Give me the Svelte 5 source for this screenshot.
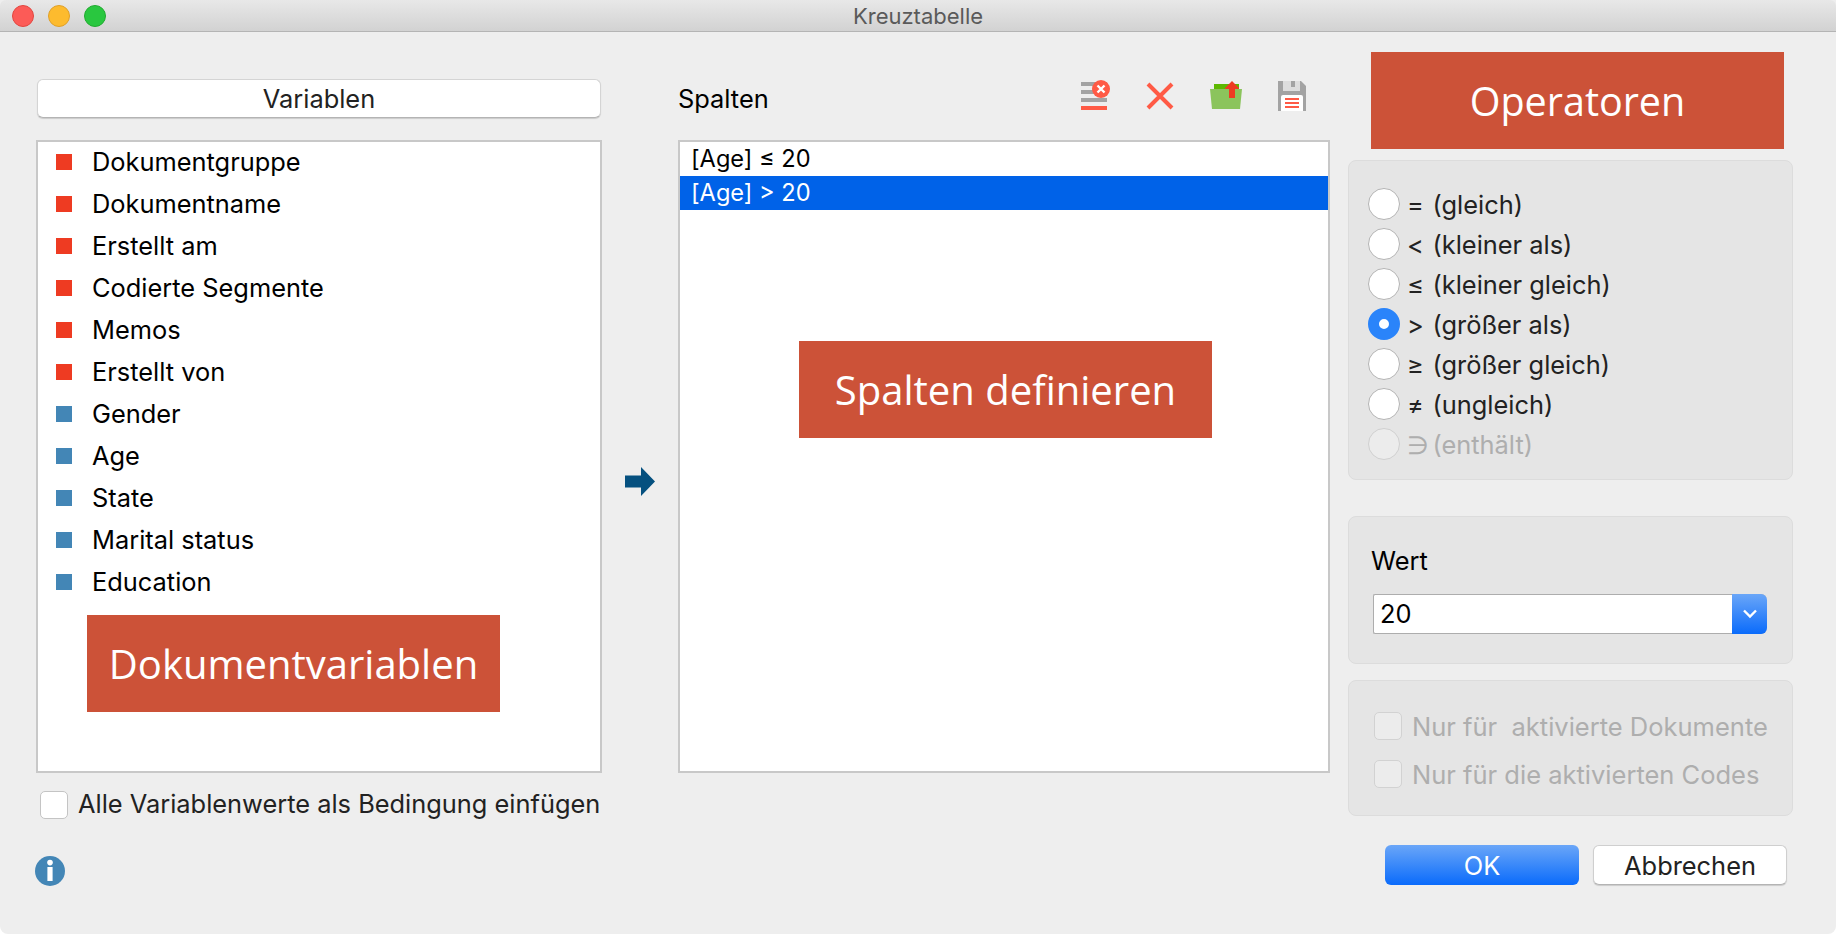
<script>
  const variables = [
    { name: 'Dokumentgruppe', kind: 'sys' },
    { name: 'Dokumentname', kind: 'sys' },
    { name: 'Erstellt am', kind: 'sys' },
    { name: 'Codierte Segmente', kind: 'sys' },
    { name: 'Memos', kind: 'sys' },
    { name: 'Erstellt von', kind: 'sys' },
    { name: 'Gender', kind: 'user' },
    { name: 'Age', kind: 'user' },
    { name: 'State', kind: 'user' },
    { name: 'Marital status', kind: 'user' },
    { name: 'Education', kind: 'user' }
  ];

  const columns = ['[Age] ≤ 20', '[Age] > 20'];
  let selectedColumn = $state(1);

  const operators = [
    { sign: '=', label: '(gleich)' },
    { sign: '<', label: '(kleiner als)' },
    { sign: '≤', label: '(kleiner gleich)' },
    { sign: '>', label: '(größer als)' },
    { sign: '≥', label: '(größer gleich)' },
    { sign: '≠', label: '(ungleich)' },
    { sign: '∋', label: '(enthält)', disabled: true }
  ];
  let selectedOp = $state(3);
</script>

<div class="window">
  <header class="titlebar">
    <span class="light red"></span>
    <span class="light yellow"></span>
    <span class="light green"></span>
    <span class="title">Kreuztabelle</span>
  </header>

  <div class="content">
    <section class="left">
      <button class="head-btn">Variablen</button>
      <ul class="list var-list">
        {#each variables as v}
          <li class="var-row">
            <span class="marker {v.kind}"></span>
            <span class="var-name">{v.name}</span>
          </li>
        {/each}
        <div class="callout callout-doc">Dokumentvariablen</div>
      </ul>
      <div class="all-values">
        <span class="check"></span>
        <span class="all-text">Alle Variablenwerte als Bedingung einfügen</span>
      </div>
      <svg class="info" width="30" height="30" viewBox="0 0 30 30">
        <circle cx="15" cy="15" r="15" fill="#4386b6" />
        <circle cx="15" cy="6.6" r="2.8" fill="#fff" />
        <rect x="12.4" y="11" width="5.2" height="14" fill="#fff" />
      </svg>
    </section>

    <div class="arrow-col">
      <svg width="30" height="30" viewBox="0 0 30 30">
        <path d="M0 8.5 H16 V0 L30 14.5 L16 29 V20.5 H0 Z" fill="#05507f" />
      </svg>
    </div>

    <section class="middle">
      <div class="mid-head">
        <span class="mid-label">Spalten</span>
        <div class="tools">
          <svg width="32" height="32" viewBox="0 0 32 32">
            <rect x="3" y="2" width="26" height="4" fill="#a3a3a3" />
            <rect x="3" y="10" width="26" height="4" fill="#a3a3a3" />
            <rect x="3" y="18" width="26" height="4" fill="#a3a3a3" />
            <rect x="3" y="26" width="26" height="4" fill="#ff5a45" />
            <circle cx="23" cy="9" r="9" fill="#ff5a45" />
            <path d="M19.5 5.5 L26.5 12.5 M26.5 5.5 L19.5 12.5" stroke="#fff" stroke-width="2.4" />
          </svg>
          <svg width="32" height="32" viewBox="0 0 32 32">
            <path d="M4 4 L28 28 M28 4 L4 28" stroke="#ff5a45" stroke-width="4" />
          </svg>
          <svg width="32" height="32" viewBox="0 0 32 32">
            <rect x="4" y="4" width="25" height="6" fill="#5db800" />
            <path d="M0 9 H32 L30 29 H2 Z" fill="#8bc45c" />
            <path d="M22 1 L29 8 V9 H25 V18 H19 V9 H15 V8 Z" fill="#ee3b22" />
          </svg>
          <svg width="32" height="32" viewBox="0 0 32 32">
            <path d="M2 1 H25 L30 6 V31 H2 Z" fill="#a3a3a3" />
            <rect x="7" y="1" width="17" height="10" fill="#dddddd" />
            <rect x="15" y="1" width="4" height="6" fill="#a3a3a3" />
            <path d="M5 31 V17 Q5 15 7 15 H25 Q27 15 27 17 V31 Z" fill="#fff" />
            <path d="M9 18 H23 V20 H9 Z M9 22 H23 V24 H9 Z M9 26 H23 V28 H9 Z" fill="#ff5a45" />
          </svg>
        </div>
      </div>
      <ul class="list col-list">
        {#each columns as col, i}
          <li class="col-row" class:selected={i === selectedColumn}>{col}</li>
        {/each}
        <div class="callout callout-col">Spalten definieren</div>
      </ul>
    </section>

    <aside class="right">
      <div class="callout callout-op">Operatoren</div>
      <div class="panel ops">
        {#each operators as op, i}
          <div class="op-row" class:disabled={op.disabled}>
            <span class="radio" class:on={i === selectedOp}></span>
            <span class="sign">{op.sign}</span>
            <span>{op.label}</span>
          </div>
        {/each}
      </div>
      <div class="panel value">
        <div class="value-label">Wert</div>
        <div class="combo">
          <span class="combo-text">20</span>
          <span class="combo-btn">
            <svg width="16" height="10" viewBox="0 0 16 10">
              <path d="M2 1.5 L8 7.5 L14 1.5" fill="none" stroke="#fff" stroke-width="2.4" />
            </svg>
          </span>
        </div>
      </div>
      <div class="panel limits">
        <div class="limit-row"><span class="check dim"></span><span>Nur für&nbsp; aktivierte Dokumente</span></div>
        <div class="limit-row"><span class="check dim"></span><span>Nur für die aktivierten Codes</span></div>
      </div>
      <div class="actions">
        <button class="btn primary">OK</button>
        <button class="btn">Abbrechen</button>
      </div>
    </aside>
  </div>
</div>

<style>
  :global(body) {
    margin: 0;
    background: #fff;
  }

  .window {
    width: 1836px;
    height: 934px;
    background: #eeeeee;
    border-radius: 0 0 8px 8px;
    overflow: hidden;
    font-family: Inter, "Noto Sans", sans-serif;
    color: #222;
  }

  .titlebar {
    height: 32px;
    box-sizing: border-box;
    display: flex;
    align-items: center;
    padding-left: 12px;
    gap: 14px;
    position: relative;
    background: linear-gradient(#e8e8e8, #d2d2d2);
    border-bottom: 1px solid #b4b4b4;
    border-radius: 6px 6px 0 0;
  }

  .light {
    width: 22px;
    height: 22px;
    border-radius: 50%;
    box-sizing: border-box;
  }
  .light.red { background: #fc5b57; border: 1px solid #e2463f; }
  .light.yellow { background: #fdbb2e; border: 1px solid #e0a028; }
  .light.green { background: #29c73f; border: 1px solid #20ab2f; }

  .title {
    position: absolute;
    left: 0;
    right: 0;
    text-align: center;
    font-size: 22px;
    color: #5a5a5a;
  }

  .content {
    display: flex;
    padding: 47px 0 0 36px;
  }

  .left {
    width: 566px;
    display: flex;
    flex-direction: column;
  }

  .head-btn {
    height: 39px;
    margin: 0 1px 22px 1px;
    padding: 0;
    border: 1px solid #d4d4d4;
    border-bottom-color: #b4b4b4;
    border-radius: 6px;
    background: #fff;
    box-shadow: 0 1px 1px rgba(0, 0, 0, 0.15);
    font: inherit;
    font-size: 25.4px;
    color: #222;
  }

  .list {
    position: relative;
    height: 633px;
    box-sizing: border-box;
    margin: 0;
    padding: 0;
    list-style: none;
    background: #fff;
    border: 2px solid #c8c8c8;
  }

  .var-row {
    height: 42px;
    display: flex;
    align-items: center;
    font-size: 25.4px;
    color: #000;
  }
  .var-row:first-child {
    margin-top: -1px;
  }

  .var-name {
    margin-bottom: 2px;
  }

  .marker {
    width: 16px;
    height: 16px;
    margin: 0 20px 0 18px;
  }
  .marker.sys { background: #ee3b22; }
  .marker.user { background: #4386b6; }

  .all-values {
    display: flex;
    align-items: center;
    gap: 10px;
    margin: 17px 0 0 4px;
    font-size: 25.4px;
    line-height: 28px;
    white-space: nowrap;
  }

  .all-text {
    margin-bottom: 1px;
  }

  .check {
    width: 28px;
    height: 28px;
    box-sizing: border-box;
    flex: none;
    background: #fff;
    border: 1px solid #c4c4c4;
    border-radius: 5px;
  }
  .check.dim {
    background: #ececec;
    border-color: #d2d2d2;
  }

  .info {
    margin-top: 37px;
    margin-left: -1px;
  }

  .arrow-col {
    width: 76px;
    display: flex;
    justify-content: center;
    align-items: flex-start;
    padding-top: 388px;
    padding-right: 1px;
    box-sizing: border-box;
  }

  .middle {
    width: 652px;
  }

  .mid-head {
    height: 39px;
    margin-bottom: 22px;
    display: flex;
    justify-content: space-between;
    align-items: center;
    padding-right: 22px;
  }

  .mid-label {
    font-size: 25.4px;
    color: #000;
  }

  .tools {
    display: flex;
    gap: 34px;
    align-self: flex-start;
    margin-top: 1px;
  }

  .col-row {
    height: 34px;
    line-height: 34px;
    padding-left: 11px;
    font-size: 23.6px;
    color: #000;
  }
  .col-row.selected {
    background: #0062e8;
    color: #fff;
  }

  .right {
    position: relative;
    width: 445px;
    margin-left: 18px;
    padding-top: 81px;
  }

  .callout {
    position: absolute;
    width: 413px;
    height: 97px;
    display: flex;
    align-items: center;
    justify-content: center;
    background: #cc5238;
    color: #fff;
    font-family: "Open Sans", sans-serif;
    font-size: 40px;
  }
  .callout-doc { left: 49px; top: 473px; }
  .callout-col { left: 119px; top: 199px; }
  .callout-op { left: 23px; top: -27px; font-size: 39.5px; }

  .panel {
    box-sizing: border-box;
    background: #e5e5e5;
    border: 1px solid #dcdcdc;
    border-radius: 8px;
  }

  .ops {
    height: 320px;
    padding: 23px 0 0 19px;
    margin-bottom: 36px;
  }

  .op-row {
    height: 40px;
    display: flex;
    align-items: center;
    font-size: 25.4px;
    color: #222;
  }
  .op-row.disabled { color: #aeaeae; }

  .radio {
    width: 32px;
    height: 32px;
    box-sizing: border-box;
    border-radius: 50%;
    background: #fff;
    border: 1px solid #b4b4b4;
    margin-right: 7px;
  }
  .op-row.disabled .radio {
    background: #ececec;
    border-color: #d0d0d0;
  }
  .radio.on {
    border: 11px solid #2a84fa;
  }

  .sign {
    width: 25.5px;
  }

  .value {
    height: 148px;
    padding: 28px 0 0 22px;
    margin-bottom: 16px;
  }

  .value-label {
    font-size: 25.4px;
    line-height: 32px;
    color: #000;
    margin-bottom: 17px;
  }

  .combo {
    width: 394px;
    height: 40px;
    margin-left: 2px;
    display: flex;
    box-sizing: border-box;
    background: #fff;
    border: 1px solid #adadad;
    border-right: none;
    border-radius: 2px 6px 6px 2px;
  }

  .combo-text {
    flex: 1;
    padding-left: 6px;
    font-size: 25.4px;
    line-height: 38px;
    color: #000;
  }

  .combo-btn {
    width: 35px;
    margin: -1px 0;
    display: flex;
    align-items: center;
    justify-content: center;
    background: linear-gradient(#6aa6f8, #0a6bfb);
    border-radius: 0 6px 6px 0;
  }

  .limits {
    height: 136px;
    padding: 31px 0 0 25px;
    display: flex;
    flex-direction: column;
    gap: 20px;
    margin-bottom: 29px;
  }

  .limit-row {
    display: flex;
    align-items: center;
    gap: 10px;
    height: 28px;
    font-size: 25.5px;
    color: #aeaeae;
    white-space: nowrap;
  }

  .actions {
    display: flex;
    gap: 14px;
    padding-left: 37px;
  }

  .btn {
    width: 194px;
    height: 40px;
    padding: 0;
    box-sizing: border-box;
    border: 1px solid #cfcfcf;
    border-bottom-color: #b4b4b4;
    border-radius: 6px;
    background: #fff;
    box-shadow: 0 1px 1px rgba(0, 0, 0, 0.15);
    font: inherit;
    font-size: 25.4px;
    color: #222;
  }
  .btn.primary {
    border: none;
    background: linear-gradient(#6aa6f8, #0a6bfb);
    box-shadow: none;
    color: #fff;
  }
</style>
